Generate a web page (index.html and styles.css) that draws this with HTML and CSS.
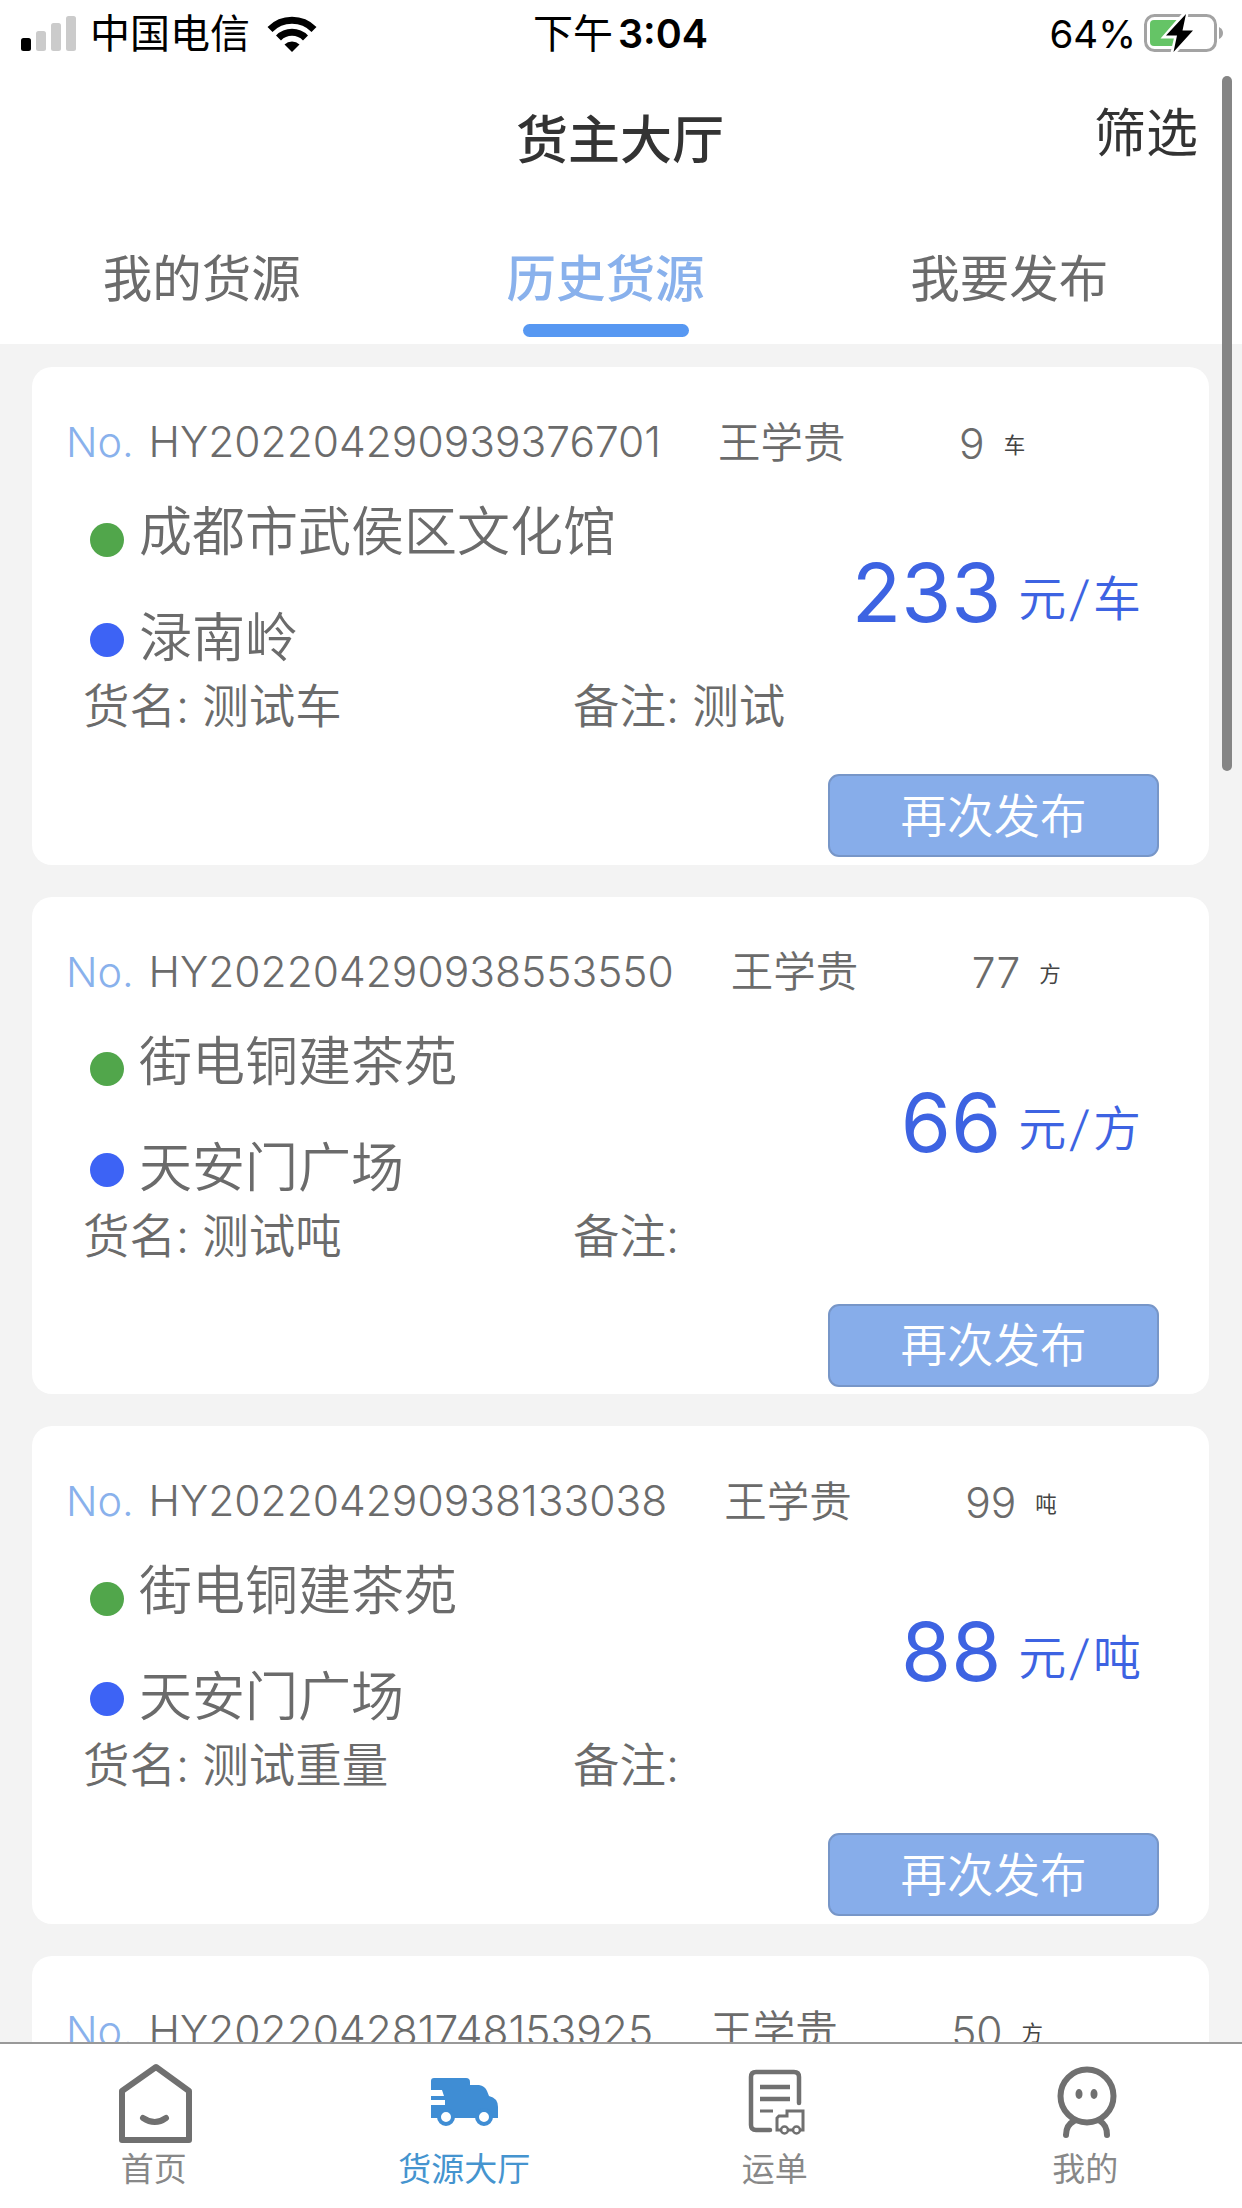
FILE: index.html
```html
<!DOCTYPE html>
<html lang="zh-CN">
<head>
<meta charset="utf-8">
<title>货主大厅</title>
<link rel="stylesheet" href="styles.css">
</head>
<body>
<div class="screen">
  <header class="top">
    <div class="status">
      <div class="status-left">
        <svg class="signal" width="56" height="36" viewBox="0 0 56 36"><rect x="0" y="22" width="10" height="13" rx="2.5"/><g fill="#cbcbcb"><rect x="15" y="15" width="10" height="20" rx="2.5"/><rect x="30" y="7" width="10" height="28" rx="2.5"/><rect x="45" y="0" width="10" height="35" rx="2.5"/></g></svg>
        <span class="carrier">中国电信</span>
        <svg class="wifi" width="50" height="36" viewBox="0 0 50 36"><g fill="none" stroke="#000" stroke-width="7"><path d="M3 13.5A31 31 0 0 1 47 13.5"/><path d="M11.5 22A19 19 0 0 1 38.5 22"/></g><path d="M25 36L17.500 28.500A11 11 0 0 1 32.500 28.500Z"/></svg>
      </div>
      <div class="clock">下午<b>3:04</b></div>
      <div class="status-right">
        <span>64%</span>
        <svg class="battery" width="80" height="40" viewBox="0 0 80 40"><rect x="1.500" y="1.500" width="70" height="35" rx="9" fill="none" stroke="#a3a3a3" stroke-width="3"/><path d="M75 13Q79 15 79 19T75 25Z" fill="#a3a3a3"/><path d="M10 6H34V32H10Q6 32 6 28V10Q6 6 10 6Z" fill="#65c466"/><path d="M42 -1L22 22H33L29 39L50 16H39Z" stroke="#fff" stroke-width="5"/><path d="M42 0L22 21.500H33L29.500 38L49 16.500H38.500Z"/></svg>
      </div>
    </div>
    <div class="titlebar"><h1>货主大厅</h1><a class="filter">筛选</a></div>
    <nav class="tabs"><a class="tab">我的货源</a><a class="tab active">历史货源</a><a class="tab">我要发布</a></nav>
  </header>
  <main class="list">
    <article class="card">
      <div class="meta"><span class="no">No.</span><span class="code">HY202204290939376701</span><span class="owner">王学贵</span><span class="qty">9</span><span class="unit">车</span></div>
      <div class="body">
        <div class="route"><div class="place from">成都市武侯区文化馆</div><div class="place to">渌南岭</div></div>
        <div class="price"><span class="amount">233</span><span class="per">元<i>/</i>车</span></div>
      </div>
      <div class="info"><span class="goods">货名: 测试车</span><span>备注: 测试</span></div>
      <button class="again">再次发布</button>
    </article>
    <article class="card">
      <div class="meta"><span class="no">No.</span><span class="code">HY202204290938553550</span><span class="owner">王学贵</span><span class="qty">77</span><span class="unit">方</span></div>
      <div class="body">
        <div class="route"><div class="place from">街电铜建茶苑</div><div class="place to">天安门广场</div></div>
        <div class="price"><span class="amount">66</span><span class="per">元<i>/</i>方</span></div>
      </div>
      <div class="info"><span class="goods">货名: 测试吨</span><span>备注:</span></div>
      <button class="again">再次发布</button>
    </article>
    <article class="card">
      <div class="meta"><span class="no">No.</span><span class="code">HY202204290938133038</span><span class="owner">王学贵</span><span class="qty">99</span><span class="unit">吨</span></div>
      <div class="body">
        <div class="route"><div class="place from">街电铜建茶苑</div><div class="place to">天安门广场</div></div>
        <div class="price"><span class="amount">88</span><span class="per">元<i>/</i>吨</span></div>
      </div>
      <div class="info"><span class="goods">货名: 测试重量</span><span>备注:</span></div>
      <button class="again">再次发布</button>
    </article>
    <article class="card">
      <div class="meta"><span class="no">No.</span><span class="code">HY202204281748153925</span><span class="owner">王学贵</span><span class="qty">50</span><span class="unit">方</span></div>
    </article>
  </main>
  <footer class="tabbar">
    <a class="item">
      <svg width="100" height="100" viewBox="0 0 100 100" fill="none" stroke="#707070" stroke-width="6" stroke-linejoin="round" stroke-linecap="round"><path d="M51 17L84 41V90H17V41Z"/><path d="M38 68Q50 76 61 68"/></svg>
      <span>首页</span></a>
    <a class="item on">
      <svg width="100" height="100" viewBox="0 0 100 100"><path fill="#3f8dd4" d="M19 28H51Q55 28 55 32V35H64Q70 36 72 41L74 46Q83 48 83 57V68H16V55H30V50H16V46H29L27 40H16V31Q16 28 19 28Z"/><g fill="#fff" stroke="#3f8dd4" stroke-width="4"><circle cx="31" cy="67" r="7"/><circle cx="69" cy="67" r="7"/></g></svg>
      <span>货源大厅</span></a>
    <a class="item">
      <svg width="100" height="100" viewBox="0 0 100 100" fill="none" stroke="#707070" stroke-width="4.500"><path stroke-linecap="round" d="M41 80H27Q22 80 22 75V27Q22 22 27 22H65Q70 22 70 27V53"/><path d="M31 37H61M31 49H61"/><path stroke-width="3" d="M31 61H44M52 80H48V68L50 66H58V61H74V80H71M59 80H64"/><g stroke-width="2.500"><circle cx="55.500" cy="80" r="3.500"/><circle cx="67.500" cy="80" r="3.500"/></g></svg>
      <span>运单</span></a>
    <a class="item">
      <svg width="100" height="100" viewBox="0 0 100 100" fill="none" stroke="#707070" stroke-width="6"><circle cx="51" cy="46" r="26.500"/><path stroke-linecap="round" d="M30 85Q30 75 38 71M71 85Q71 75 64 71"/><g fill="#707070" stroke="none"><ellipse cx="43" cy="44" rx="3.500" ry="5"/><ellipse cx="58" cy="44" rx="3.500" ry="5"/></g></svg>
      <span>我的</span></a>
  </footer>
  <div class="scrollbar"></div>
</div>
</body>
</html>
```
FILE: styles.css
```css
* { box-sizing: border-box; margin: 0; padding: 0; }
body { background: #fff; font-family: Inter, "Noto Sans CJK SC", sans-serif; color: #6b6b6b; }
.screen { position: relative; width: 1242px; height: 2208px; display: flex; flex-direction: column; overflow: hidden; background: #f3f3f3; white-space: nowrap; }
.top { height: 344px; flex: none; background: #fff; }
.status { height: 68px; display: grid; grid-template-columns: 1fr auto 1fr; align-items: center; color: #000; font-size: 40px; line-height: 60px; padding: 0 18px 0 21px; }
.status-left, .status-right { display: flex; align-items: center; }
.status-right { justify-content: flex-end; gap: 8px; font-size: 38.500px; }
.signal, .wifi, .battery { overflow: visible; }
.signal { margin-right: 13px; }
.wifi { margin-left: 17px; }
.clock { padding-right: 4px; }
.clock b { font-weight: 600; font-size: 39.500px; margin-left: 5px; }
.titlebar { height: 140px; display: grid; grid-template-columns: 1fr auto 1fr; color: #333; }
.titlebar h1 { grid-column: 2; font-size: 52px; font-weight: 500; line-height: 145px; padding-right: 2px; }
.filter { justify-self: end; font-size: 52px; line-height: 132px; padding-right: 44px; }
.tabs { height: 136px; width: 1211px; display: flex; }
.tab { flex: 1; display: flex; flex-direction: column; align-items: center; font-size: 49.500px; line-height: 142px; height: 129px; }
.tab.active { color: #89b1ec; font-weight: 500; }
.tab.active::after { content: ""; width: 166px; height: 13px; border-radius: 7px; background: #5798f2; margin-top: -26px; }
.list { height: 1698px; padding: 23px 33px 0 32px; overflow: hidden; display: flex; flex-direction: column; gap: 32px; }
.card { flex: none; height: 497.500px; border-radius: 20px; background: #fff; padding-top: 41px; }
.meta { height: 68px; display: flex; align-items: center; padding-left: 34px; font-size: 42.500px; line-height: 68px; font-weight: 350; }
.no { width: 82.500px; color: #89b1ec; font-size: 41.500px; }
.owner { margin-left: 57px; width: 241px; padding-top: 1px; }
.qty { padding-top: 3px; }
.unit { margin-left: 19px; padding-top: 5px; font-size: 21.500px; font-weight: 400; color: #444; }
.body { height: 193px; display: flex; justify-content: space-between; padding-right: 68px; }
.route { padding-left: 58px; }
.place { display: flex; align-items: center; gap: 15px; font-size: 53px; height: 106px; line-height: 100px; padding-top: 6px; font-weight: 350; }
.place::before { content: ""; width: 34px; height: 34px; border-radius: 50%; background: #51a64b; margin-top: 15px; }
.place.to::before { background: #3d63f5; margin-top: 4px; }
.price { display: flex; align-items: flex-start; gap: 17px; color: #3d63e2; line-height: 100px; }
.amount { font-size: 81px; font-weight: 370; padding-top: 67px; }
.per { font-size: 48px; font-weight: 350; padding-top: 73px; }
.per i { display: inline-block; font-style: normal; transform: skewX(-7deg); padding: 0 5px; }
.info { height: 72px; display: flex; padding-left: 51px; font-size: 46.500px; line-height: 74px; font-weight: 350; }
.goods { width: 490px; }
.again { display: block; margin: 33px 50px 0 auto; width: 331px; height: 83px; border: 2px solid #7796c8; border-radius: 11px; background: #87adea; color: #fff; font: 350 46.500px/70px "Noto Sans CJK SC", sans-serif; padding-bottom: 6px; }
.tabbar { height: 166px; background: #fff; border-top: 2px solid #999; display: flex; }
.item { flex: 1; display: flex; flex-direction: column; align-items: center; font-size: 33px; line-height: 40px; color: #888; padding: 6px 3px 0 0; }
.item span { margin-top: -1px; }
.item svg { margin-left: 2px; }
.item:nth-child(3) svg { margin-left: 8px; }
.item.on { color: #4594cf; }
.scrollbar { position: absolute; left: 1222px; top: 76px; width: 10px; height: 695px; border-radius: 5px; background: #858585; }
```
